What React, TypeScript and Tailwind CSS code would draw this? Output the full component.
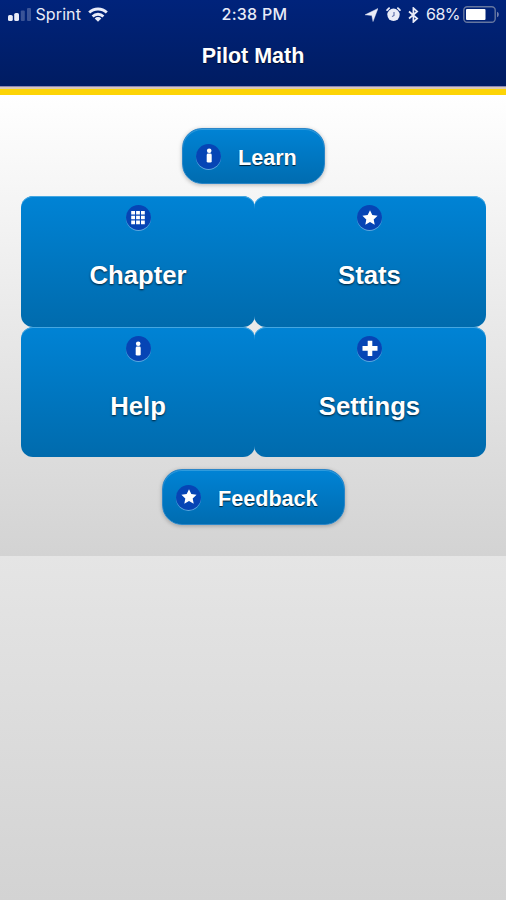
import type { ReactNode } from "react";

type GlyphName = "info" | "grid" | "star" | "plus";

interface MenuItem {
  label: string;
  icon: GlyphName;
}

const tiles: MenuItem[] = [
  { label: "Chapter", icon: "grid" },
  { label: "Stats", icon: "star" },
  { label: "Help", icon: "info" },
  { label: "Settings", icon: "plus" },
];

const glyphs: Record<GlyphName, ReactNode> = {
  info: (
    <>
      <circle cx="12.2" cy="6.7" r="2.3" />
      <rect x="9.7" y="9.6" width="5" height="9" rx="1.4" />
    </>
  ),
  grid: (
    <path d="M5.2 5h3.8v3.6H5.2zM10.1 5h3.8v3.6h-3.8zM15 5h3.8v3.6H15zM5.2 9.7h3.8v3.6H5.2zM10.1 9.7h3.8v3.6h-3.8zM15 9.7h3.8v3.6H15zM5.2 14.6h3.8v3.6H5.2zM10.1 14.6h3.8v3.6h-3.8zM15 14.6h3.8v3.6H15z" />
  ),
  star: (
    <path d="M12 4.2l2.3 4.8 5.3.7-3.9 3.7 1 5.3-4.7-2.6-4.7 2.6 1-5.3-3.9-3.7 5.3-.7z" />
  ),
  plus: <path d="M9.7 3.8h4.6v5.3h5.2v4.6h-5.2V19H9.7v-5.3H4.5V9.1h5.2z" />,
};

export default function App() {
  return (
    <div className="flex h-[900px] w-[506px] flex-col bg-[#e5e5e5] font-['Liberation_Sans',Arial,sans-serif] text-white">
      <header className="h-[95px] border-b-[6px] border-[#fdd406] bg-[#d9c9b4]">
        <div className="h-[87px] border-b border-[#8a86b8] bg-linear-to-b from-[#00237b] to-[#001c62]">
          <StatusBar />
          <h1 className="pt-[12px] text-center text-[21.5px] leading-[31px] font-bold [text-shadow:0_1px_1px_#000a]">
            Pilot Math
          </h1>
        </div>
      </header>

      <main className="flex h-[461px] flex-col items-center bg-linear-to-b from-white to-[#d3d3d3] pt-[33px]">
        <PillButton label="Learn" icon="info" className="w-[143px]" />
        <div className="my-[12px] grid w-[465px] grid-cols-[233px_231px] grid-rows-[131px_130px]">
          {tiles.map((tile) => (
            <Tile key={tile.label} {...tile} />
          ))}
        </div>
        <PillButton label="Feedback" icon="star" className="w-[183px]" />
      </main>

      <div className="flex-1 bg-linear-to-b from-[#e5e5e5] to-[#d3d3d3]" />
    </div>
  );
}

function StatusBar() {
  return (
    <div className="grid h-[29px] grid-cols-[1fr_auto_1fr] items-center pr-[6px] pl-[8px] font-[Inter,sans-serif] text-[16px] leading-[29px] text-[#e9ecf8]">
      <div className="flex items-center">
        <svg width="24" height="14" viewBox="0 0 24 14" fill="currentColor">
          <rect x="0" y="7" width="4.8" height="6" rx="1.6" />
          <rect x="6.2" y="5" width="4.8" height="8" rx="1.6" />
          <rect x="12.8" y="2.5" width="4" height="10.5" rx="1" opacity=".25" />
          <rect x="19" y="0" width="4" height="13" rx="1" opacity=".25" />
        </svg>
        <span className="ml-[3.5px] w-[47px] tracking-[0.1px]">Sprint</span>
        <svg
          className="-mt-px ml-[5px]"
          width="20"
          height="15"
          viewBox="0 0 20 15"
          fill="none"
          stroke="currentColor"
          strokeWidth="2.8"
        >
          <path d="M1.2 5.6a12.6 12.6 0 0 1 17.6 0" />
          <path d="M4.6 9.4a7.8 7.8 0 0 1 10.8 0" />
          <path d="M10 14.8l-3.3-3.4a4.7 4.7 0 0 1 6.6 0z" fill="currentColor" stroke="none" />
        </svg>
      </div>
      <span className="pl-px font-medium tracking-[0.3px]">2:38 PM</span>
      <div className="flex items-center justify-end">
        <svg width="14" height="14" viewBox="0 0 14 14" fill="currentColor">
          <path d="M14 .4L9 13.6 7.8 7.6 1 6.8z" stroke="currentColor" strokeWidth=".4" />
        </svg>
        <svg className="ml-[8px]" width="15" height="15" viewBox="0 0 15 15">
          <circle cx="7.5" cy="7.8" r="6.2" fill="currentColor" />
          <g fill="none" stroke="currentColor" strokeWidth="1.8" strokeLinecap="round">
            <path d="M1.1 3.2l2-2M13.9 3.2l-2-2" />
          </g>
          <path d="M8 5v3.4L6 9.6" fill="none" stroke="#5c6da8" strokeWidth="1.1" />
        </svg>
        <svg
          className="ml-[7px]"
          width="11"
          height="16"
          viewBox="0 0 11 16"
          fill="none"
          stroke="currentColor"
          strokeWidth="1.7"
        >
          <path d="M1 4.5l8.2 7-3.8 3.4V1.1l3.8 3.4-8.2 7" />
        </svg>
        <span className="ml-[7px] w-[34px] tracking-[-0.5px]">68%</span>
        <svg className="ml-[3px]" width="37" height="17" viewBox="0 0 37 17">
          <rect
            x=".8"
            y=".8"
            width="31.4"
            height="15.4"
            rx="3.5"
            fill="none"
            stroke="#65769f"
            strokeWidth="1.4"
          />
          <rect x="3" y="3" width="19.5" height="11" rx="1" fill="#fff" />
          <path d="M34 5.8c2.4.6 2.4 4.8 0 5.4z" fill="#7381ae" />
        </svg>
      </div>
    </div>
  );
}

function PillButton({ label, icon, className }: MenuItem & { className: string }) {
  return (
    <button
      className={`ml-px flex h-[56px] shrink-0 items-center rounded-[20px] border border-[#2b86c8] bg-linear-to-b from-[#0083d5] to-[#006cb0] pl-[13px] shadow-[inset_0_1px_0_#2f9bdc,0_1px_4px_#0004] ${className}`}
    >
      <Badge icon={icon} />
      <span className="ml-[17px] pt-[4px] text-[21.6px] leading-[28px] font-bold [text-shadow:0_1px_1px_#000b]">
        {label}
      </span>
    </button>
  );
}

function Tile({ label, icon }: MenuItem) {
  return (
    <button className="-mr-px flex flex-col items-center rounded-[12px] bg-linear-to-b from-[#0083d5] to-[#006bad] pt-[9px] shadow-[inset_0_1px_0_#45a7e1] odd:pl-px">
      <Badge icon={icon} />
      <span className="mt-[28px] text-[25.7px] leading-[34px] font-bold [text-shadow:0_1px_2px_#000b]">
        {label}
      </span>
    </button>
  );
}

function Badge({ icon }: { icon: GlyphName }) {
  return (
    <span className="flex size-[25px] shrink-0 items-center justify-center rounded-full bg-[#0645b5] shadow-[0_1px_0_#5ba5de]">
      <svg width="24" height="24" viewBox="0 0 24 24" fill="#fff">
        {glyphs[icon]}
      </svg>
    </span>
  );
}
